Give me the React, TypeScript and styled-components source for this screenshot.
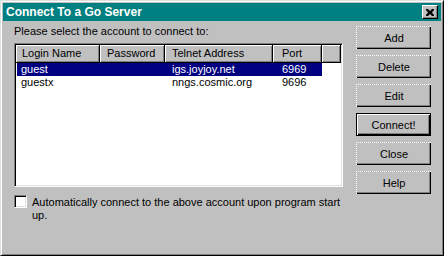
import React from 'react';
import styled, { createGlobalStyle } from 'styled-components';

const GlobalStyle = createGlobalStyle`
  html, body {
    margin: 0;
    padding: 0;
    background: #c0c0c0;
  }
  * {
    box-sizing: border-box;
  }
`

const Window = styled.div`
  width: 444px;
  height: 256px;
  display: flex;
  flex-direction: column;
  background: #c0c0c0;
  border-top: 1px solid #dfdfdf;
  border-left: 1px solid #dfdfdf;
  border-right: 1px solid #000000;
  border-bottom: 1px solid #000000;
  box-shadow: inset 1px 1px 0 #ffffff, inset -1px -1px 0 #808080;
  padding: 2px;
  font-family: "Liberation Sans", Arial, sans-serif;
  font-size: 11px;
  color: #000000;
`

const TitleBar = styled.div`
  height: 18px;
  display: flex;
  align-items: center;
  justify-content: space-between;
  background: #008080;
  padding: 0 3px 0 3px;
`

const Title = styled.span`
  color: #ffffff;
  font-weight: bold;
  font-size: 12px;
`

const CloseBox = styled.div`
  width: 16px;
  height: 14px;
  background: #c0c0c0;
  border-top: 1px solid #ffffff;
  border-left: 1px solid #ffffff;
  border-right: 1px solid #000000;
  border-bottom: 1px solid #000000;
  box-shadow: inset -1px -1px 0 #808080;
  display: flex;
  align-items: center;
  justify-content: center;
`

const Body = styled.div`
  flex: 1;
  display: flex;
  padding: 4px 10px 0 11px;
  gap: 13px;
`

const LeftCol = styled.div`
  width: 329px;
  display: flex;
  flex-direction: column;
`

const Prompt = styled.div`
  line-height: 13px;
  margin-bottom: 5px;
`

const ListView = styled.div`
  height: 144px;
  background: #ffffff;
  border-top: 1px solid #808080;
  border-left: 1px solid #808080;
  border-right: 1px solid #ffffff;
  border-bottom: 1px solid #ffffff;
  box-shadow: inset 1px 1px 0 #000000, inset -1px -1px 0 #dfdfdf;
  padding: 1px;
  overflow: hidden;
`

const cols = '84px 65px 108px 49px 1fr'

const HeaderRow = styled.div`
  display: grid;
  grid-template-columns: ${cols};
  height: 18px;
`

const HeaderCell = styled.div<{ $pad?: number }>`
  background: #c0c0c0;
  border-right: 1px solid #000000;
  border-bottom: 1px solid #000000;
  box-shadow: inset 1px 1px 0 #ffffff, inset -1px -1px 0 #808080;
  padding-left: ${p => p.$pad ?? 7}px;
  line-height: 16px;
  white-space: nowrap;
  overflow: hidden;
`

const Row = styled.div<{ $selected?: boolean }>`
  display: grid;
  grid-template-columns: ${cols};
  height: 13px;
  line-height: 13px;
  color: ${p => (p.$selected ? '#ffffff' : '#000000')};
`

const Cell = styled.div<{ $selected?: boolean; $first?: boolean; $pad?: number }>`
  background: ${p => (p.$selected ? '#000080' : 'transparent')};
  padding-left: ${p => p.$pad ?? (p.$first ? 4 : 7)}px;
  margin-left: ${p => (p.$first ? 1 : 0)}px;
  white-space: nowrap;
  overflow: hidden;
`

const CheckRow = styled.div`
  display: flex;
  align-items: flex-start;
  gap: 5px;
  margin-top: 8px;
`

const CheckBox = styled.div`
  flex: none;
  width: 13px;
  height: 13px;
  background: #ffffff;
  border-top: 1px solid #808080;
  border-left: 1px solid #808080;
  border-right: 1px solid #ffffff;
  border-bottom: 1px solid #ffffff;
  box-shadow: inset 1px 1px 0 #000000, inset -1px -1px 0 #dfdfdf;
`

const CheckLabel = styled.div`
  line-height: 13px;
  margin-top: 1px;
`

const RightCol = styled.div`
  width: 75px;
  display: flex;
  flex-direction: column;
  gap: 6px;
  padding-top: 1px;
`

const Button = styled.div<{ $default?: boolean }>`
  height: 23px;
  display: flex;
  align-items: center;
  justify-content: center;
  background: #c0c0c0;
  border: ${p => (p.$default ? '1px solid #000000' : 'none')};
  border-top: ${p => (p.$default ? '1px solid #000000' : '1px dotted #ffffff')};
  border-left: ${p => (p.$default ? '1px solid #000000' : '1px dotted #ffffff')};
  box-shadow: ${p =>
    p.$default
      ? 'inset 1px 1px 0 #ffffff, inset -1px -1px 0 #000000, inset -2px -2px 0 #808080'
      : 'inset -1px -1px 0 #000000, inset -2px -2px 0 #808080'};
`

const accounts = [
  { login: 'guest', password: '', host: 'igs.joyjoy.net', port: '6969' },
  { login: 'guestx', password: '', host: 'nngs.cosmic.org', port: '9696' },
]

function App() {
  return (
    <>
      <GlobalStyle />
      <Window>
        <TitleBar>
          <Title>Connect To a Go Server</Title>
          <CloseBox>
            <svg width="8" height="7" viewBox="0 0 8 7">
              <path d="M0 0h2l2 2 2-2h2v1L6 3.5 8 6v1H6L4 5 2 7H0V6l2-2.5L0 1z" fill="#000" />
            </svg>
          </CloseBox>
        </TitleBar>
        <Body>
          <LeftCol>
            <Prompt>Please select the account to connect to:</Prompt>
            <ListView>
              <HeaderRow>
                <HeaderCell $pad={6}>Login Name</HeaderCell>
                <HeaderCell>Password</HeaderCell>
                <HeaderCell>Telnet Address</HeaderCell>
                <HeaderCell $pad={9}>Port</HeaderCell>
                <HeaderCell />
              </HeaderRow>
              {accounts.map((a, i) => (
                <Row key={a.login} $selected={i === 0}>
                  <Cell $first $selected={i === 0}>{a.login}</Cell>
                  <Cell $selected={i === 0}>{a.password}</Cell>
                  <Cell $selected={i === 0}>{a.host}</Cell>
                  <Cell $selected={i === 0} $pad={9}>{a.port}</Cell>
                  <div />
                </Row>
              ))}
            </ListView>
            <CheckRow>
              <CheckBox />
              <CheckLabel>Automatically connect to the above account upon program start up.</CheckLabel>
            </CheckRow>
          </LeftCol>
          <RightCol>
            <Button>Add</Button>
            <Button>Delete</Button>
            <Button>Edit</Button>
            <Button $default>Connect!</Button>
            <Button>Close</Button>
            <Button>Help</Button>
          </RightCol>
        </Body>
      </Window>
    </>
  )
}

export default App
